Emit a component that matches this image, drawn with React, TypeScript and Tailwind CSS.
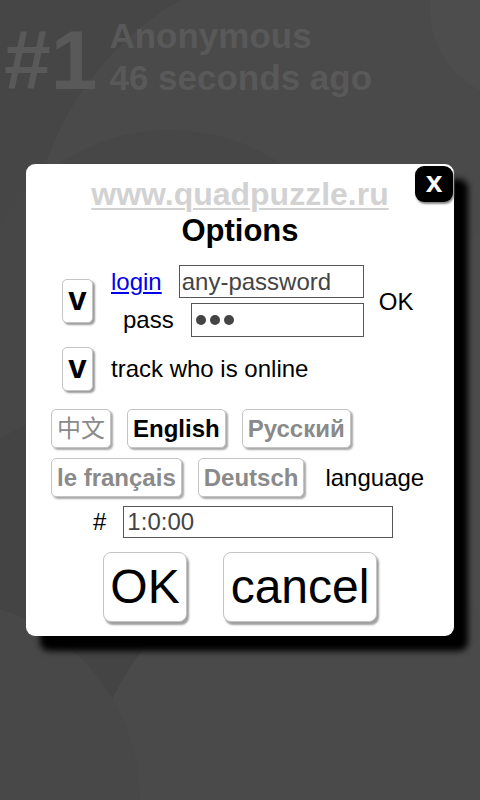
import React from "react";

const font = { fontFamily: '"Liberation Sans", Arial, "Noto Sans CJK SC", sans-serif' };

function CheckBox() {
  return (
    <div className="flex h-[44px] w-[31px] shrink-0 items-center justify-center rounded-[5px] border border-[#c4c4c4] bg-white text-[33px] font-bold leading-none text-black shadow-[2px_2px_2px_#9a9a9a]">
      <span className="-mt-[6px]">v</span>
    </div>
  );
}

function LangButton({ label, active, cjk }: { label: string; active?: boolean; cjk?: boolean }) {
  return (
    <div
      className={`flex h-[39px] items-center rounded-[5px] border border-[#c4c4c4] bg-white px-[5px] text-[24px] leading-[28px] shadow-[2px_2px_2px_#a8a8a8] ${
        cjk ? "font-normal" : "font-bold"
      } ${active ? "text-black" : "text-[#8a8a8a]"}`}
    >
      {label}
    </div>
  );
}

function Backdrop() {
  return (
    <svg className="absolute inset-0" width="480" height="800" viewBox="0 0 480 800">
      <rect width="480" height="800" fill="#464646" />
      <circle cx="330" cy="260" r="300" fill="#4a4a4a" />
      <circle cx="170" cy="330" r="200" fill="#474747" />
      <circle cx="620" cy="520" r="320" fill="#4b4b4b" />
      <circle cx="90" cy="560" r="150" fill="#444444" />
      <circle cx="330" cy="800" r="240" fill="#4a4a4a" />
      <circle cx="-60" cy="800" r="200" fill="#484848" />
      <circle cx="520" cy="10" r="90" fill="#4d4d4d" />
    </svg>
  );
}

export default function App() {
  return (
    <div className="relative h-[800px] w-[480px] overflow-hidden" style={font}>
      <Backdrop />

      {/* leaderboard behind the dialog */}
      <div className="relative flex items-start pl-[4px] pt-[15px] text-[#595959]">
        <div className="text-[84px] font-bold leading-[90px]">#1</div>
        <div className="ml-[12px] text-[35px] font-bold leading-[42px]">
          <div>Anonymous</div>
          <div>46 seconds ago</div>
        </div>
      </div>

      {/* options dialog */}
      <div className="absolute left-[26px] top-[164px] flex h-[472px] w-[428px] flex-col rounded-[9px] bg-white shadow-[14px_15px_6px_#000]">
        <button className="absolute right-[1px] top-[2px] flex h-[36px] w-[38px] items-center justify-center rounded-[9px] bg-black text-[30px] font-bold leading-none text-white shadow-[1px_2px_2px_#888]">
          <span className="-mt-[5px]">x</span>
        </button>

        <div className="mt-[12px] text-center text-[32px] font-bold leading-[36px] text-[#d2d2d2] underline decoration-2 underline-offset-[3px]">
          www.quadpuzzle.ru
        </div>
        <div className="mt-[1px] text-center text-[31px] font-bold leading-[36px] text-black">Options</div>

        {/* login block */}
        <div className="ml-[36px] mt-[16px] flex items-center text-[24px] leading-[28px] text-black">
          <CheckBox />
          <div className="ml-[18px] flex flex-col items-end gap-[5px]">
            <div className="flex items-center gap-[17px]">
              <a href="#" className="text-[#0000ee] underline underline-offset-[2px]">login</a>
              <div className="flex h-[33px] w-[185px] items-center border border-[#555] px-[2px] text-[#444]">any-password</div>
            </div>
            <div className="flex items-center gap-[17px]">
              <span>pass</span>
              <div className="flex h-[34px] w-[173px] items-center gap-[4px] border border-[#555] pl-[4px]">
                <span className="h-[10px] w-[10px] rounded-full bg-[#444]" />
                <span className="h-[10px] w-[10px] rounded-full bg-[#444]" />
                <span className="h-[10px] w-[10px] rounded-full bg-[#444]" />
              </div>
            </div>
          </div>
          <span className="ml-[15px] mt-[1px]">OK</span>
        </div>

        {/* track online */}
        <div className="ml-[36px] mt-[10px] flex items-center text-[24px] leading-[28px] text-black">
          <CheckBox />
          <span className="ml-[18px]">track who is online</span>
        </div>

        {/* languages */}
        <div className="ml-[25px] mt-[18px] flex gap-[16px]">
          <LangButton label="中文" cjk />
          <LangButton label="English" active />
          <LangButton label="Русский" />
        </div>
        <div className="ml-[25px] mt-[10px] flex items-center gap-[16px]">
          <LangButton label="le français" />
          <LangButton label="Deutsch" />
          <span className="ml-[5px] text-[24px] leading-[28px] text-black">language</span>
        </div>

        {/* number */}
        <div className="ml-[67px] mt-[9px] flex items-center gap-[17px] text-[24px] leading-[28px]">
          <span className="text-black">#</span>
          <div className="flex h-[32px] w-[270px] items-center border border-[#555] px-[3px] text-[#444]">1:0:00</div>
        </div>

        {/* actions */}
        <div className="mt-[14px] flex justify-center gap-[36px] text-[48px] leading-none text-black">
          <button className="flex h-[70px] w-[84px] items-center justify-center rounded-[8px] border border-[#c4c4c4] bg-white shadow-[2px_3px_2px_#a0a0a0]">
            OK
          </button>
          <button className="flex h-[70px] w-[154px] items-center justify-center rounded-[8px] border border-[#c4c4c4] bg-white shadow-[2px_3px_2px_#a0a0a0]">
            cancel
          </button>
        </div>
      </div>
    </div>
  );
}
